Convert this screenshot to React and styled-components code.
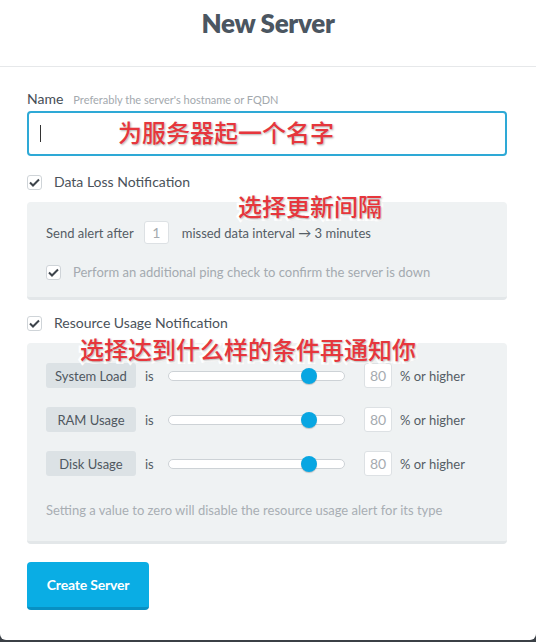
import React from "react";
import styled, { createGlobalStyle } from "styled-components";

const GlobalStyle = createGlobalStyle`
  html, body {
    margin: 0;
    padding: 0;
    background: #3b4046;
  }
  body {
    font-family: "Lato", "Noto Sans", sans-serif;
  }
  * { box-sizing: border-box; }
`;

const Modal = styled.div`
  width: 536px;
  height: 640px;
  background: #fff;
  border-radius: 0 0 6px 6px;
  overflow: hidden;
`;

const Header = styled.div`
  height: 67px;
  border-bottom: 1px solid #e6e8ea;
  display: flex;
  justify-content: center;
  padding-top: 7px;
  h1 {
    margin: 0;
    font-size: 26px;
    line-height: 32px;
    font-weight: 800;
    color: #4b5661;
    letter-spacing: -0.3px;
  }
`;

const Body = styled.div`
  padding: 24px 29px 0 27px;
  display: flex;
  flex-direction: column;
`;

const FieldLabel = styled.div`
  display: flex;
  align-items: baseline;
  gap: 10px;
  line-height: 16px;
  font-size: 14px;
  color: #454d55;
  span {
    font-size: 11px;
    color: #a3a9ae;
  }
`;

const InputWrap = styled.div`
  position: relative;
  margin-top: 3px;
  height: 45px;
  border: 2px solid #2ea9d6;
  border-radius: 4px;
  display: flex;
  align-items: center;
  padding-left: 11px;
`;

const Caret = styled.div`
  width: 1px;
  height: 17px;
  background: #333;
`;

const Note = styled.div`
  position: absolute;
  left: ${(p) => p.$left}px;
  top: ${(p) => p.$top}px;
  font-family: "Noto Sans CJK SC", sans-serif;
  font-size: 24px;
  font-weight: 500;
  line-height: 28px;
  color: #e6363c;
  -webkit-text-stroke: 5px #fff;
  paint-order: stroke fill;
  text-shadow: 1px 1px 2px rgba(0, 0, 0, 0.3);
  white-space: nowrap;
  pointer-events: none;
`;

const CheckRow = styled.label`
  display: flex;
  align-items: center;
  gap: 12px;
  margin-top: ${(p) => p.$top || 0}px;
  font-size: ${(p) => (p.$muted ? 13 : 14)}px;
  color: ${(p) => (p.$muted ? "#a4aab0" : "#4a525a")};
  line-height: 16px;
`;

const Box = styled.span`
  width: 15px;
  height: 15px;
  border: 1px solid #cfd4d8;
  border-radius: 3px;
  background: #fff;
  display: flex;
  align-items: center;
  justify-content: center;
  flex-shrink: 0;
`;

const Panel = styled.div`
  position: relative;
  margin-top: 12px;
  background: #eff2f3;
  border-bottom: 3px solid #e3e7e9;
  border-radius: 4px;
  padding: ${(p) => p.$pad};
  display: flex;
  flex-direction: column;
`;

const AlertRow = styled.div`
  display: flex;
  align-items: center;
  font-size: 13px;
  color: #555d65;
`;

const SmallInput = styled.div`
  width: ${(p) => p.$w}px;
  height: ${(p) => p.$h}px;
  margin: 0 ${(p) => p.$mr}px 0 ${(p) => p.$ml}px;
  background: #fff;
  border: 1px solid #dde1e4;
  border-radius: 3px;
  display: flex;
  align-items: center;
  justify-content: center;
  color: #a5abb0;
  font-size: 14px;
`;

const UsageList = styled.div`
  display: flex;
  flex-direction: column;
  gap: 19px;
`;

const UsageRow = styled.div`
  display: flex;
  align-items: center;
  height: 25px;
  font-size: 13px;
  color: #555d65;
`;

const Pill = styled.div`
  width: 90px;
  height: 25px;
  border-radius: 3px;
  background: #dce2e5;
  display: flex;
  align-items: center;
  justify-content: center;
  color: #4f575f;
`;

const Is = styled.span`
  width: 32px;
  padding-left: 9px;
`;

const Track = styled.div`
  position: relative;
  width: 177px;
  height: 10px;
  border: 1px solid #cdd2d6;
  border-radius: 5px;
  background: #fff;
`;

const Thumb = styled.div`
  position: absolute;
  top: 50%;
  width: 16px;
  height: 16px;
  margin: -8px 0 0 -8px;
  border-radius: 50%;
  background: #08a6e2;
  box-shadow: 0 1px 1px rgba(0, 0, 0, 0.2);
`;

const Footnote = styled.div`
  margin-top: 26px;
  font-size: 13px;
  color: #a8aeb3;
  line-height: 16px;
`;

const Button = styled.button`
  margin-top: 18px;
  align-self: flex-start;
  width: 122px;
  height: 48px;
  border: none;
  border-bottom: 3px solid #0890c3;
  border-radius: 4px;
  background: #0aade4;
  color: #fff;
  font-family: "Lato", "Noto Sans", sans-serif;
  font-size: 14px;
  font-weight: 700;
  letter-spacing: -0.2px;
  padding: 0;
`;

const Check = () => (
  <Box>
    <svg width="11" height="9" viewBox="0 0 11 9">
      <path d="M1 4.5 L4 7.5 L10 1.5" fill="none" stroke="#3d444b" strokeWidth="2" />
    </svg>
  </Box>
);

const usages = ["System Load", "RAM Usage", "Disk Usage"];

const UsageItem = ({ name, value }) => (
  <UsageRow>
    <Pill>{name}</Pill>
    <Is>is</Is>
    <Track>
      <Thumb style={{ left: `${value}%` }} />
    </Track>
    <SmallInput $w={28} $h={25} $ml={19} $mr={8}>{value}</SmallInput>
    <span>% or higher</span>
  </UsageRow>
);

export default function App() {
  return (
    <>
      <GlobalStyle />
      <Modal>
        <Header>
          <h1>New Server</h1>
        </Header>
        <Body>
          <FieldLabel>
            Name <span>Preferably the server's hostname or FQDN</span>
          </FieldLabel>
          <InputWrap>
            <Caret />
            <Note $left={89} $top={5}>为服务器起一个名字</Note>
          </InputWrap>

          <CheckRow $top={18}>
            <Check />
            Data Loss Notification
          </CheckRow>
          <Panel $pad="19px 19px 17px">
            <Note $left={211} $top={-10}>选择更新间隔</Note>
            <AlertRow>
              Send alert after
              <SmallInput $w={25} $h={23} $ml={10} $mr={13}>1</SmallInput>
              missed data interval → 3 minutes
            </AlertRow>
            <CheckRow $top={20} $muted>
              <Check />
              Perform an additional ping check to confirm the server is down
            </CheckRow>
          </Panel>

          <CheckRow $top={15}>
            <Check />
            Resource Usage Notification
          </CheckRow>
          <Panel $pad="20px 19px 23px">
            <Note $left={53} $top={-8}>选择达到什么样的条件再通知你</Note>
            <UsageList>
              {usages.map((u) => (
                <UsageItem key={u} name={u} value={80} />
              ))}
            </UsageList>
            <Footnote>Setting a value to zero will disable the resource usage alert for its type</Footnote>
          </Panel>

          <Button>Create Server</Button>
        </Body>
      </Modal>
    </>
  );
}
